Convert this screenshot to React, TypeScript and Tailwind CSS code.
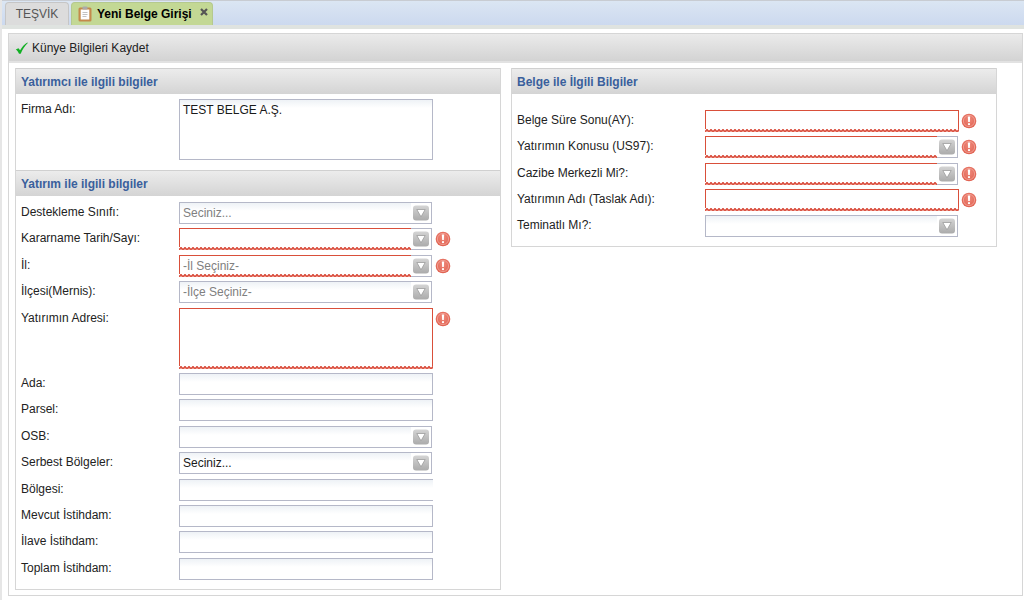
import type { ReactNode } from 'react';

interface FieldProps {
	id: string;
	label: string;
	kind?: 'text' | 'combo' | 'area';
	value?: string;
	muted?: boolean;
	invalid?: boolean;
	clipped?: boolean;
}

const leftFields: FieldProps[] = [
	{ id: 'destek', label: 'Destekleme Sınıfı:', kind: 'combo', value: 'Seciniz...', muted: true },
	{ id: 'kararname', label: 'Kararname Tarih/Sayı:', kind: 'combo', invalid: true },
	{ id: 'il', label: 'İl:', kind: 'combo', value: '-İl Seçiniz-', muted: true, invalid: true },
	{ id: 'ilce', label: 'İlçesi(Mernis):', kind: 'combo', value: '-İlçe Seçiniz-', muted: true },
	{ id: 'adres', label: 'Yatırımın Adresi:', kind: 'area', invalid: true },
	{ id: 'ada', label: 'Ada:' },
	{ id: 'parsel', label: 'Parsel:' },
	{ id: 'osb', label: 'OSB:', kind: 'combo' },
	{ id: 'serbest', label: 'Serbest Bölgeler:', kind: 'combo', value: 'Seciniz...' },
	{ id: 'bolge', label: 'Bölgesi:', clipped: true },
	{ id: 'mevcut', label: 'Mevcut İstihdam:' },
	{ id: 'ilave', label: 'İlave İstihdam:' },
	{ id: 'toplam', label: 'Toplam İstihdam:' },
];

const rightFields: FieldProps[] = [
	{ id: 'sure', label: 'Belge Süre Sonu(AY):', invalid: true },
	{ id: 'konu', label: 'Yatırımın Konusu (US97):', kind: 'combo', invalid: true },
	{ id: 'cazibe', label: 'Cazibe Merkezli Mi?:', kind: 'combo', invalid: true },
	{ id: 'taslak', label: 'Yatırımın Adı (Taslak Adı):', invalid: true },
	{ id: 'teminat', label: 'Teminatlı Mı?:', kind: 'combo' },
];

const ErrorIcon = () => (
	<svg className="mt-[3px] size-4 shrink-0" viewBox="0 0 16 16" role="img" aria-label="Hata">
		<defs>
			<radialGradient id="err" cx="50%" cy="40%" r="60%">
				<stop offset="0" stopColor="#ef8a7c" />
				<stop offset="1" stopColor="#e0604f" />
			</radialGradient>
		</defs>
		<circle cx="8" cy="8" r="7.3" fill="url(#err)" />
		<circle cx="8" cy="8" r="5.6" fill="none" stroke="#f3b0a6" strokeWidth="0.7" />
		<path d="M6.8 3.6h2.4l-.4 5.4H7.2z" fill="#fff" />
		<circle cx="8" cy="11.2" r="1.1" fill="#fff" />
	</svg>
);

// Red squiggle along the bottom edge of a required field
const Squiggle = ({ id, combo }: { id: string; combo: boolean }) => (
	<svg className={`pointer-events-none absolute bottom-0 left-0 h-[3px] ${combo ? 'w-[232px]' : 'w-full'}`} aria-hidden="true">
		<defs>
			<pattern id={`wave-${id}`} width="4" height="3" patternUnits="userSpaceOnUse">
				<rect width="4" height="3" fill="#fff" />
				<rect width="4" height="1" y="2" fill="#ee9f94" />
				<path d="M0 2.5 L2 .5 L4 2.5" fill="none" stroke="#d63a28" strokeWidth="1.2" />
			</pattern>
		</defs>
		<rect width="100%" height="3" fill={`url(#wave-${id})`} />
	</svg>
);

const Field = ({ id, label, kind = 'text', value, muted, invalid, clipped }: FieldProps) => {
	const border = invalid ? 'border-[#d94f3a]' : 'border-[#b5b8c8]';
	const box = `block w-full border px-[3px] outline-none bg-linear-to-b bg-no-repeat ${border} ${
		invalid ? 'bg-white' : 'from-[#eef2f6] to-white to-[8px]'
	} ${muted ? 'text-[#808080]' : 'text-[#1a1a1a]'}`;

	return (
		<div className="flex items-start">
			<label htmlFor={id} className="w-[158px] shrink-0 pt-0.5 leading-4 group-data-wide:w-[188px]">{label}</label>
			<div className={`relative shrink-0 ${kind === 'combo' ? 'w-[253px]' : 'w-[254px]'}`}>
				{kind === 'area' && (
					<textarea id={id} defaultValue={value} className={`${box} h-[61px] resize-none pt-0.5 leading-4`} />
				)}
				{kind === 'text' && (
					<input id={id} type="text" className={`${box} h-[22px] ${clipped ? 'border-r-0' : ''}`} />
				)}
				{kind === 'combo' && (
					<>
						<select id={id} className={`${box} h-[22px] appearance-none`}>
							<option>{value}</option>
						</select>
						<span className="pointer-events-none absolute top-0 right-0 flex h-[22px] w-[21px] items-center justify-center border border-l-0 border-[#b5b8c8] bg-white">
							<svg className="size-4" viewBox="0 0 16 16" aria-hidden="true">
								<defs>
									<linearGradient id="trig" x2="0" y2="1">
										<stop offset="0" stopColor="#d4d4d4" />
										<stop offset="1" stopColor="#ababab" />
									</linearGradient>
								</defs>
								<rect width="16" height="15" y=".5" rx="3" fill="url(#trig)" />
								<path d="M3.8 4.5h8.4L8 11.8z" fill="#fff" stroke="#9c9c9c" strokeWidth=".8" />
							</svg>
						</span>
					</>
				)}
				{invalid && <Squiggle id={id} combo={kind === 'combo'} />}
			</div>
			{invalid && <div className={kind === 'combo' ? 'pl-[3px]' : 'pl-0.5'}><ErrorIcon /></div>}
		</div>
	);
};

const PanelTitle = ({ children }: { children: ReactNode }) => (
	<h2 className="h-[26px] border-t border-[#d0d0d0] bg-linear-to-b from-[#ececec] to-[#d4d4d4] px-[5px] font-bold leading-[26px] text-[#3a5f9c]">
		{children}
	</h2>
);

export default function App() {
	return (
		<div className="min-h-[600px] border-l-2 border-[#e6e6e6] bg-white font-['Liberation_Sans',Arial,sans-serif] text-[12px] text-[#222]">
			<nav className="flex h-[29px] items-start border-t border-b-4 border-t-[#c8ccd2] border-b-[#dfe3e0] bg-linear-to-b from-[#dbe6f3] to-[#ccd9ef] pt-px pl-[3px]">
				<button type="button" className="h-[23px] w-16 rounded-t border border-b-0 border-[#c6c6c6] bg-[#dcdcdc] text-[#555]">TEŞVİK</button>
				<div className="ml-0.5 flex h-[23px] w-[142px] rounded-t border border-b-0 border-[#b5c98e] bg-[#c3d894] pl-[5px]">
					<button type="button" className="flex items-center gap-1 font-bold whitespace-nowrap text-black">
						<svg className="size-4" viewBox="0 0 16 16" aria-hidden="true">
							<rect x="1.5" y="1.5" width="13" height="14" rx="1.5" fill="#c48a4c" />
							<path d="M3.7 3.5h8.600v10H3.700z" fill="#fff" />
							<path d="M5.500 6.500h5M5.500 8.500h5M5.500 10.500h4" stroke="#c2c2c2" />
							<rect x="5.500" y=".5" width="5" height="3" rx="1" fill="#aaa" />
						</svg>
						Yeni Belge Girişi
					</button>
					<button type="button" aria-label="Kapat" className="ml-[7px] flex h-[18px] w-2.5 items-center">
						<svg className="size-2.5" viewBox="0 0 10 10" aria-hidden="true">
							<path d="M2 2l6 6M8 2L2 8" stroke="#555" strokeWidth="2.2" />
						</svg>
					</button>
				</div>
			</nav>

			<main className="mt-1 mr-px ml-1.5 border border-[#d6d6d6] pb-[5px]">
				<div className="flex h-[29px] items-center border-b-2 border-[#e2e2e2] bg-linear-to-b from-[#ebebeb] to-[#d3d3d3] pl-1.5">
					<button type="button" className="flex items-center gap-[3px]">
						<svg className="size-3.5" viewBox="0 0 14 14" aria-hidden="true">
							<path d="M.8 8.600L3.400 7.200l1.700 2C7 6 9.300 3.300 12.400 1.500l.4.600C9.800 5 7.600 8.300 5.700 12.700l-1.700.1C3.200 11 2.200 9.600.8 8.600z" fill="#12b024" />
						</svg>
						Künye Bilgileri Kaydet
					</button>
				</div>

				<div className="flex items-start gap-2.5 pt-[5px] pl-1.5">
					<section className="w-[486px] shrink-0 border border-t-0 border-[#d6d6d6] pb-[9px]">
						<PanelTitle>Yatırımcı ile ilgili bilgiler</PanelTitle>
						<div className="px-[5px] pt-[5px] pb-2.5">
							<Field id="firma" label="Firma Adı:" kind="area" value="TEST BELGE A.Ş." />
						</div>
						<PanelTitle>Yatırım ile ilgili bilgiler</PanelTitle>
						<div className="flex min-h-[384px] flex-col justify-between px-[5px] pt-1.5">
							{leftFields.map((f) => <Field key={f.id} {...f} />)}
						</div>
					</section>

					<section data-wide className="group w-[486px] shrink-0 border border-t-0 border-[#d6d6d6] pb-[9px]">
						<PanelTitle>Belge ile İlgili Bilgiler</PanelTitle>
						<div className="flex min-h-[143px] flex-col justify-between px-[5px] pt-4">
							{rightFields.map((f) => <Field key={f.id} {...f} />)}
						</div>
					</section>
				</div>
			</main>
		</div>
	);
}
